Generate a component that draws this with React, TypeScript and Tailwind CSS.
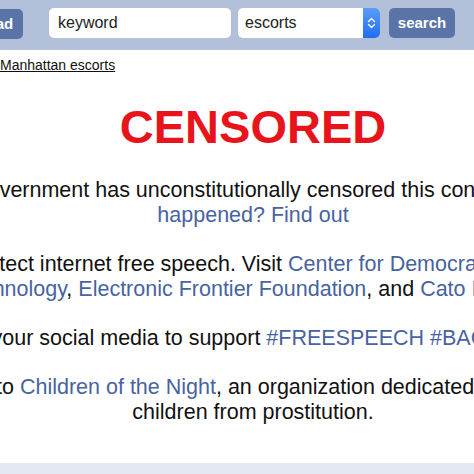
import React from "react";

const LINK = "text-[#4863a0]";

function Stepper() {
  return (
    <div className="w-[17px] h-full rounded-r-[5px] bg-gradient-to-b from-[#5a9cf8] to-[#1f6ef0] flex items-center justify-center">
      <svg width="9" height="14" viewBox="0 0 9 14" fill="none">
        <path d="M1.5 5.5 L4.5 2.5 L7.5 5.5" stroke="white" strokeWidth="1.4" strokeLinecap="round" strokeLinejoin="round" />
        <path d="M1.5 8.5 L4.5 11.5 L7.5 8.5" stroke="white" strokeWidth="1.4" strokeLinecap="round" strokeLinejoin="round" />
      </svg>
    </div>
  );
}

export default function App() {
  return (
    <div className="w-[474px] h-[474px] overflow-hidden bg-white font-['Liberation_Sans',Arial,sans-serif] text-[#111]">
      <div className="h-[50px] bg-[#b2bfd8] flex items-start pt-[8px]">
        <button className="ml-[-50px] mt-[1px] w-[73px] h-[30px] rounded-[5px] bg-[#5a74a8] text-white font-bold text-[15px] shrink-0">
          post ad
        </button>
        <div className="ml-[26px] w-[182px] h-[30px] rounded-[5px] bg-white pl-[9px] flex items-center text-[16px] text-[#222] shrink-0">
          keyword
        </div>
        <div className="ml-[7px] w-[142px] h-[30px] rounded-[5px] bg-white flex shrink-0">
          <span className="flex-1 pl-[7px] flex items-center text-[16px] text-[#222]">escorts</span>
          <Stepper />
        </div>
        <button className="ml-[9px] w-[66px] h-[30px] rounded-[5px] bg-[#5a74a8] text-white font-bold text-[15px] shrink-0">
          search
        </button>
      </div>

      <div className="mt-[5px] h-[20px] text-[14px] leading-[20px]">
        <a className="underline text-[#111]">Manhattan escorts</a>
      </div>

      <div className="w-[680px] ml-[-87px] text-center">
        <h1 className="mt-[28px] h-[47px] text-[47px] leading-[47px] font-bold text-[#e8141c]">CENSORED</h1>

        <p className="mt-[28px] text-[21.5px] leading-[25px] whitespace-nowrap">
          The government has unconstitutionally censored this content. <a className={LINK}>What</a>
          <br />
          <a className={LINK}>happened? Find out</a>
        </p>

        <p className="mt-[24px] text-[21.5px] leading-[25px] whitespace-nowrap">
          Protect internet free speech. Visit <a className={LINK}>Center for Democracy and</a>
          <br />
          <a className={LINK}>Technology</a>, <a className={LINK}>Electronic Frontier Foundation</a>, and{" "}
          <a className={LINK}>Cato Institute</a>
        </p>

        <p className="mt-[24px] text-[21.5px] leading-[25px] whitespace-nowrap">
          Use your social media to support <a className={LINK}>#FREESPEECH #BACKPAGE</a>
        </p>

        <p className="mt-[24px] text-[21.5px] leading-[25px] whitespace-nowrap">
          Donate to <a className={LINK}>Children of the Night</a>, an organization dedicated to rescuing
          <br />
          children from prostitution.
        </p>
      </div>

      <div className="mt-[38px] h-[40px] bg-[#e4e8f3]" />
    </div>
  );
}
